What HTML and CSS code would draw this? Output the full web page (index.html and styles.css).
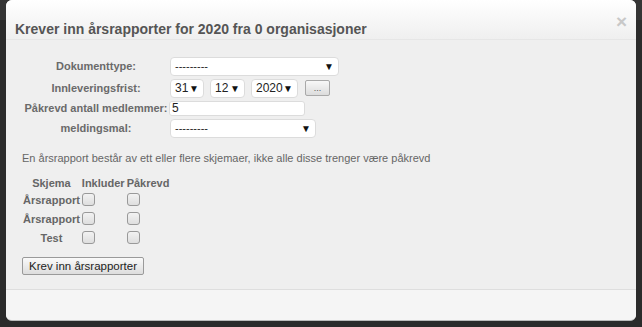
FILE: index.html
```html
<!DOCTYPE html>
<html lang="no">
<head>
<meta charset="utf-8">
<title>Krever inn årsrapporter</title>
<link rel="stylesheet" href="styles.css">
</head>
<body>
<div class="modal">
  <div class="modal-header">
    <h3 class="title">Krever inn årsrapporter for 2020 fra 0 organisasjoner</h3>
    <span class="close">×</span>
  </div>
  <div class="modal-body">
    <div class="form">
      <div class="row row-doc">
        <label class="lbl">Dokumenttype:</label>
        <div class="select sel-doc"><span>---------</span><span class="arrow">▼</span></div>
      </div>
      <div class="row">
        <label class="lbl">Innleveringsfrist:</label>
        <div class="dates">
          <div class="select sel-day"><span>31</span><span class="arrow">▼</span></div>
          <div class="select sel-month"><span>12</span><span class="arrow">▼</span></div>
          <div class="select sel-year"><span>2020</span><span class="arrow">▼</span></div>
          <button class="dots">...</button>
        </div>
      </div>
      <div class="row row-input">
        <label class="lbl">Påkrevd antall medlemmer:</label>
        <input class="txt" type="text" value="5">
      </div>
      <div class="row">
        <label class="lbl">meldingsmal:</label>
        <div class="select sel-msg"><span>---------</span><span class="arrow">▼</span></div>
      </div>
    </div>
    <p class="info">En årsrapport består av ett eller flere skjemaer, ikke alle disse trenger være påkrevd</p>
    <table class="schema">
      <thead>
        <tr><th>Skjema</th><th>Inkluder</th><th>Påkrevd</th></tr>
      </thead>
      <tbody>
        <tr><td class="name">Årsrapport</td><td><span class="cb"></span></td><td><span class="cb"></span></td></tr>
        <tr><td class="name">Årsrapport</td><td><span class="cb"></span></td><td><span class="cb"></span></td></tr>
        <tr><td class="name">Test</td><td><span class="cb"></span></td><td><span class="cb"></span></td></tr>
      </tbody>
    </table>
    <button class="submit">Krev inn årsrapporter</button>
  </div>
  <div class="modal-footer"></div>
</div>
</body>
</html>
```

FILE: styles.css
```css
html, body {
  margin: 0;
  padding: 0;
}
body {
  width: 642px;
  height: 327px;
  overflow: hidden;
  background: linear-gradient(#353535 0, #353535 20px, #2b2b2b 20px);
  font-family: "Liberation Sans", Arial, sans-serif;
}
.modal {
  margin: 0 6px;
  width: 630px;
  height: 321px;
  background: #efefef;
  border-bottom: 1px solid #bbb;
  box-sizing: border-box;
  display: flex;
  flex-direction: column;
  overflow: hidden;
  border-radius: 6px;
}
.modal-header {
  height: 40px;
  box-sizing: border-box;
  border-bottom: 1px solid #e6e6e6;
  background: linear-gradient(#ffffff, #efefef);
  display: flex;
  align-items: flex-end;
  justify-content: space-between;
  padding: 0 9px 2px 9px;
}
.title {
  margin: 0;
  font-size: 14px;
  font-weight: bold;
  color: #555;
}
.close {
  align-self: flex-start;
  margin-top: 12px;
  font-size: 19px;
  font-weight: bold;
  color: #c8c8c8;
  line-height: 20px;
}
.modal-body {
  flex: 1;
  padding: 16px 16px 0 16px;
  color: #666;
  font-size: 11px;
}
.form {
  display: flex;
  flex-direction: column;
}
.row {
  display: flex;
  align-items: center;
  height: 20px;
  margin-bottom: 1px;
}
.row-doc {
  margin-bottom: 2px;
}
.row-input {
  height: 18px;
  margin-bottom: 1px;
}
.lbl {
  width: 148px;
  text-align: center;
  font-weight: bold;
  color: #6a6a6a;
  box-sizing: border-box;
  white-space: nowrap;
}
.select {
  height: 19px;
  box-sizing: border-box;
  background: #fff;
  border: 1px solid #dcdcdc;
  border-radius: 4px;
  display: flex;
  align-items: center;
  justify-content: space-between;
  padding: 0 4px 0 4px;
  color: #222;
  font-size: 11px;
}
.select .arrow {
  font-size: 10px;
  color: #111;
}
.sel-doc { width: 169px; }
.sel-msg { width: 146px; }
.dates {
  display: flex;
  align-items: center;
  gap: 6px;
}
.sel-day { width: 34px; font-size: 12px; }
.sel-month { width: 35px; font-size: 12px; }
.sel-year { width: 47px; font-size: 12px; }
.dots {
  width: 25px;
  height: 16px;
  margin-left: 1px;
  padding: 0;
  border: 1px solid #a9a9a9;
  border-radius: 2px;
  background: linear-gradient(#f8f8f8, #dcdcdc);
  font-size: 9px;
  color: #555;
  font-family: "Liberation Sans", Arial, sans-serif;
}
.txt {
  width: 136px;
  height: 15px;
  box-sizing: border-box;
  margin: 0 0 0 -1px;
  padding: 0 2px;
  border: 1px solid #dcdcdc;
  border-radius: 3px;
  background: #fff;
  font-family: "Liberation Sans", Arial, sans-serif;
  font-size: 12px;
  color: #222;
  outline: none;
}
.info {
  margin: 13px 0 12px 0;
  font-size: 11px;
  color: #666;
}
.schema {
  border-collapse: collapse;
  font-size: 11px;
  color: #666;
}
.schema th {
  font-weight: bold;
  padding: 0 1px;
  text-align: center;
  height: 14px;
}
.schema td {
  padding: 0 1px;
  height: 19px;
  vertical-align: middle;
}
.schema td.name {
  font-weight: bold;
  text-align: center;
}
.cb {
  display: block;
  width: 11px;
  height: 11px;
  border: 1px solid #999;
  border-radius: 3px;
  background: linear-gradient(#f2f2f2, #dedede);
}
.submit {
  margin-top: 10px;
  height: 18px;
  padding: 0 6px;
  border: 1px solid #9a9a9a;
  border-radius: 2px;
  background: linear-gradient(#fafafa, #dddddd);
  font-family: "Liberation Sans", Arial, sans-serif;
  font-size: 11.5px;
  color: #222;
}
.modal-footer {
  height: 30px;
  background: #f5f5f5;
  border-top: 1px solid #dedede;
}
```
